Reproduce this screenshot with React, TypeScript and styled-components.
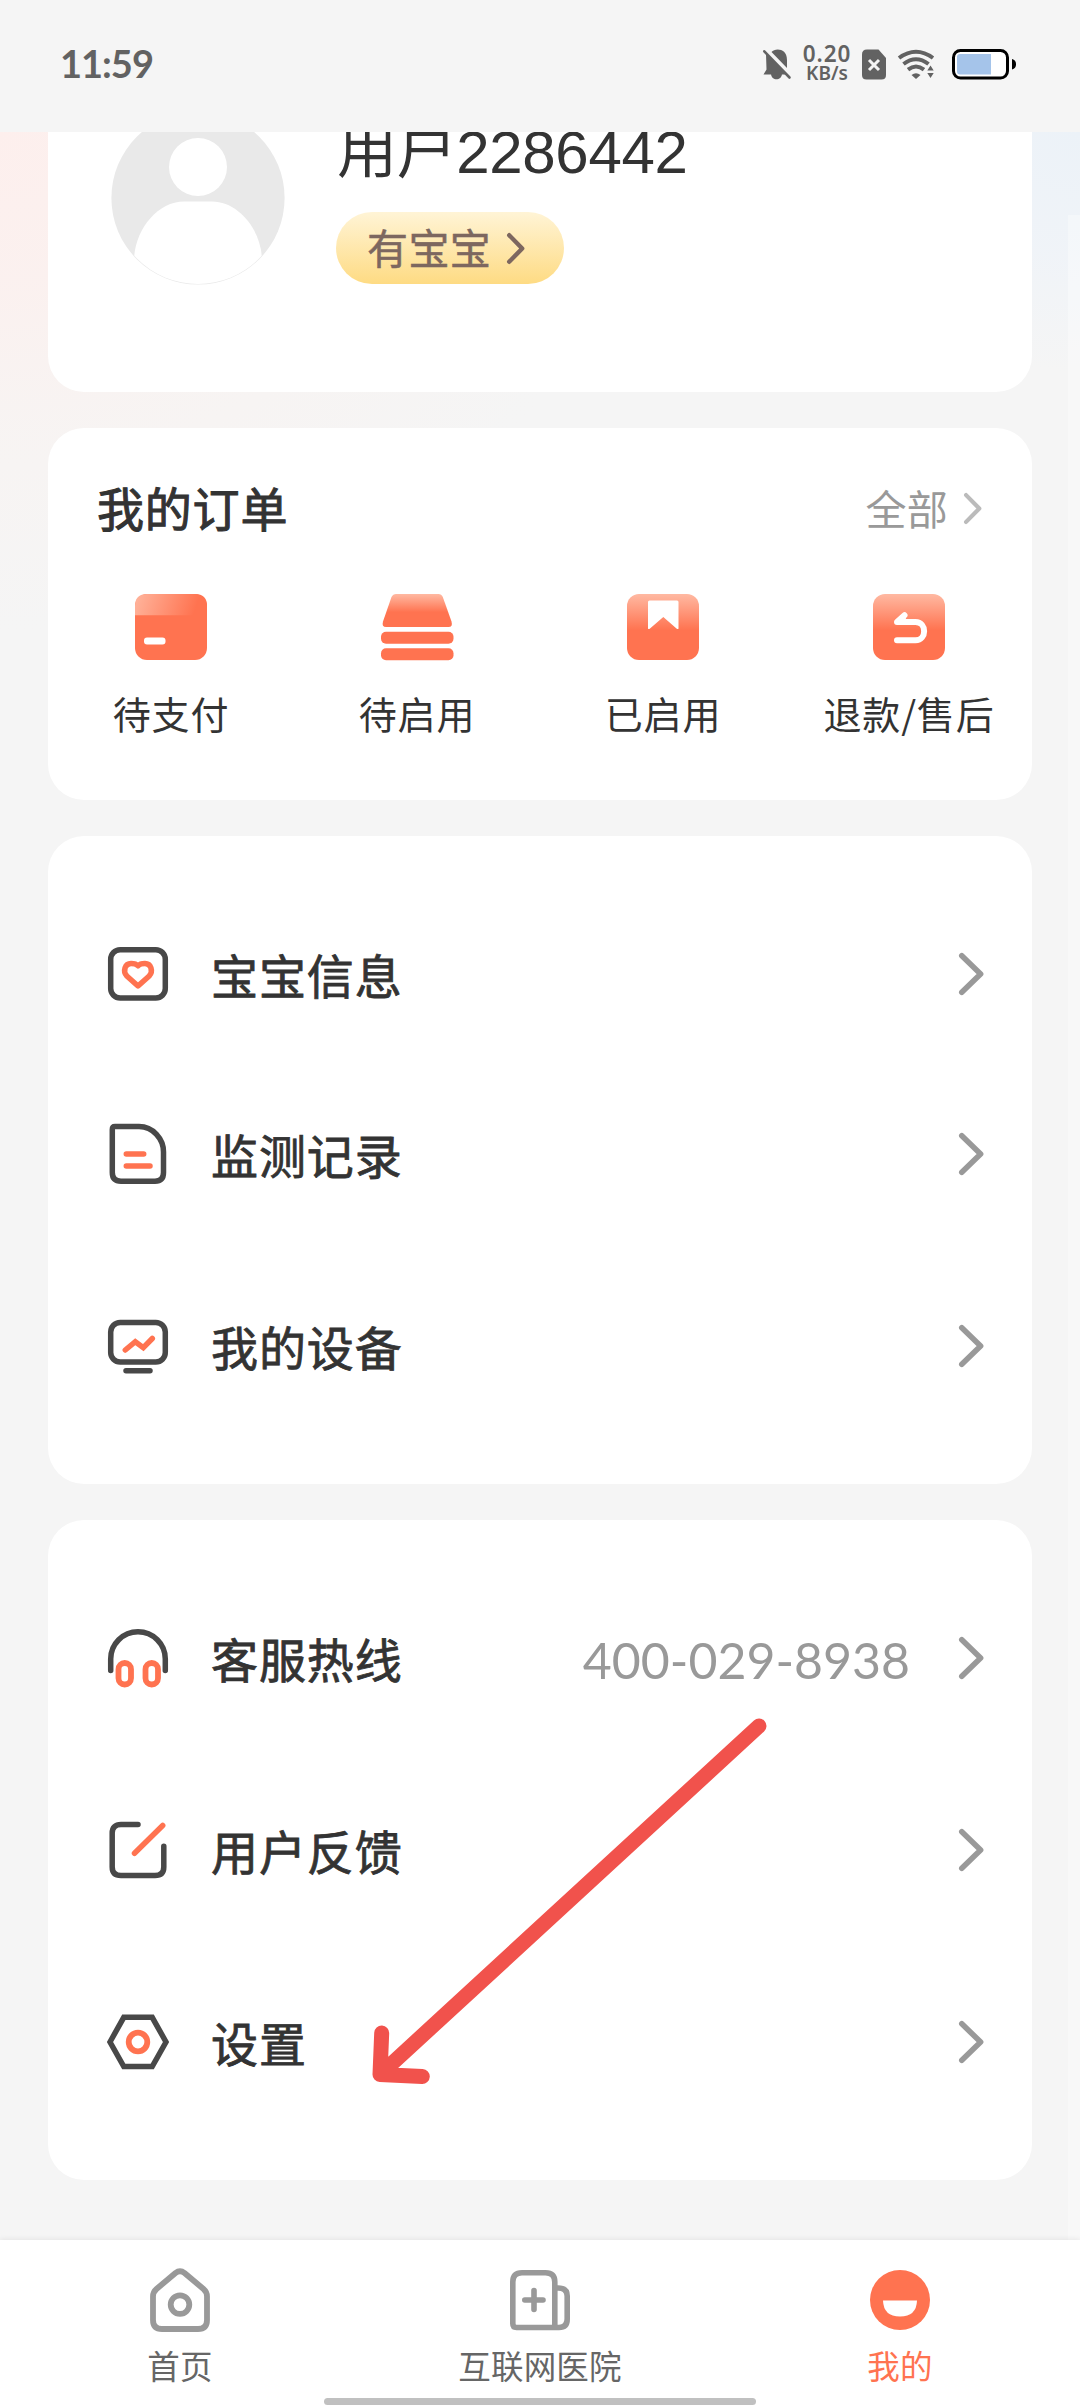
import React from "react";
import styled, { createGlobalStyle } from "styled-components";

const cjk = `"Noto Sans CJK SC", sans-serif`;
const ink = "#333333";
const coral = "#ff7350";
const line = "#484848";

const GlobalStyle = createGlobalStyle`
  * { box-sizing: border-box; }
  body { margin: 0; background: #f5f5f5; font-family: ${cjk}; color: ${ink}; }
  svg { display: block; overflow: visible; flex: none; }
`;

const Screen = styled.div`
  position: relative;
  width: 1080px;
  height: 2408px;
  overflow: hidden;
  display: flex;
  flex-direction: column;
  background: #f5f5f5;
`;

const StatusBar = styled.header`
  flex: none;
  height: 132px;
  padding: 0 64px 4px 60px;
  display: flex;
  align-items: center;
  justify-content: space-between;
  background: #f5f5f5;
  color: #626262;
`;

const Clock = styled.div`
  padding-bottom: 2px;
  font: 700 38px/40px Lato, sans-serif;
  letter-spacing: -1px;
`;

const StatusIcons = styled.div`
  display: flex;
  align-items: center;
`;

const Speed = styled.div`
  width: 52px;
  margin: 0 9px 0 10px;
  padding-bottom: 2px;
  text-align: center;
  font-family: "Noto Sans", sans-serif;
  font-weight: 600;
  white-space: nowrap;
`;

const SpeedValue = styled.div`
  font-size: 22.5px;
  line-height: 20px;
  letter-spacing: 0.9px;
`;

const SpeedUnit = styled.div`
  font-size: 19px;
  line-height: 18px;
`;

const Sim = styled.div`
  margin-right: 12px;
`;

const Signal = styled.div`
  margin-right: 17px;
`;

const Content = styled.main`
  flex: 1;
  min-height: 0;
  position: relative;
  padding: 0 48px;
  overflow: hidden;
  display: flex;
  flex-direction: column;
  gap: 36px;
  background:
    radial-gradient(ellipse 640px 500px at 0 0, #fdefed 0%, rgba(252, 240, 238, 0.85) 30%, rgba(249, 243, 241, 0.6) 60%, rgba(245, 245, 245, 0) 100%),
    radial-gradient(ellipse 300px 240px at 100% 0, #ecf2f8 0%, rgba(238, 243, 249, 0.75) 50%, rgba(245, 245, 245, 0) 100%),
    #f5f5f5;
`;

const ScrollTrack = styled.div`
  position: absolute;
  top: 83px;
  right: 0;
  bottom: 0;
  width: 12px;
  background: rgba(255, 255, 255, 0.35);
`;

const Card = styled.section`
  flex: none;
  background: #fff;
  border-radius: 36px;
`;

const ProfileCard = styled(Card)`
  height: 260px;
  padding-left: 63px;
  display: flex;
  gap: 51px;
  overflow: hidden;
  border-top-left-radius: 0;
  border-top-right-radius: 0;
`;

const AvatarFrame = styled.div`
  margin-top: -21px;
`;

const ProfileText = styled.div`
  margin-top: -21px;
  display: flex;
  flex-direction: column;
  align-items: flex-start;
`;

const UserName = styled.div`
  height: 101px;
  padding-left: 1px;
  font: 400 60px/84px "Liberation Sans", ${cjk};
  letter-spacing: -0.35px;
  white-space: nowrap;
`;

const BabyTag = styled.div`
  width: 228px;
  height: 72px;
  padding-left: 31px;
  border-radius: 36px;
  display: flex;
  align-items: center;
  gap: 16px;
  background: linear-gradient(#fff4d6, #fedb83);
  color: #7d675f;
  font-size: 41px;
  letter-spacing: 0.4px;
  line-height: 69px;
  -webkit-text-stroke: 0.5px currentColor;
  white-space: nowrap;
`;

const TagText = styled.span`
  padding-bottom: 3px;
`;

const OrdersCard = styled(Card)`
  height: 372px;
`;

const OrdersHead = styled.div`
  height: 166px;
  padding: 0 50px 6px 49px;
  display: flex;
  align-items: center;
  justify-content: space-between;
`;

const OrdersTitle = styled.h2`
  margin: 0;
  padding-bottom: 3px;
  font-size: 47px;
  letter-spacing: 0.8px;
  line-height: 60px;
  font-weight: 400;
  -webkit-text-stroke: 1px currentColor;
`;

const AllLink = styled.div`
  display: flex;
  align-items: center;
  gap: 16px;
  font-size: 41px;
  letter-spacing: 0.3px;
  line-height: 60px;
  color: #999;
`;

const AllText = styled.span`
  padding-bottom: 3px;
`;

const OrderGrid = styled.div`
  display: grid;
  grid-template-columns: repeat(4, 1fr);
`;

const OrderItem = styled.div`
  display: flex;
  flex-direction: column;
  align-items: center;
  gap: 28px;
  font-size: 38px;
  letter-spacing: 0.8px;
  line-height: 50px;
  white-space: nowrap;
`;

const MenuCard = styled(Card)`
  padding: 42px 48px 42px 60px;
`;

const Row = styled.div<{ $compact?: boolean }>`
  height: ${(p) => (p.$compact ? 168 : 192)}px;
  margin-bottom: ${(p) => (p.$compact ? 12 : 0)}px;
  display: flex;
  align-items: center;
`;

const RowLabel = styled.div`
  flex: 1;
  padding: 0 0 1px 43px;
  font-size: 47px;
  letter-spacing: 0.9px;
  line-height: 64px;
  -webkit-text-stroke: 0.8px currentColor;
`;

const RowValue = styled.div`
  margin-right: 49px;
  padding-top: 4px;
  font: 400 50px/64px Lato, sans-serif;
  color: #999;
`;

const TabBar = styled.nav`
  flex: none;
  position: relative;
  height: 168px;
  display: grid;
  grid-template-columns: repeat(3, 1fr);
  background: #fff;
  box-shadow: 0 -1px 5px rgba(0, 0, 0, 0.07);
`;

const Tab = styled.div<{ $active?: boolean }>`
  padding-top: 28px;
  display: flex;
  flex-direction: column;
  align-items: center;
  gap: 13px;
  font-size: 32.5px;
  letter-spacing: 0.2px;
  line-height: 40px;
  color: ${(p) => (p.$active ? coral : "#666")};
`;

const HomeIndicator = styled.div`
  position: absolute;
  left: 324px;
  bottom: 3px;
  width: 432px;
  height: 7px;
  border-radius: 4px;
  background: #c0c0c0;
`;

const Pointer = styled.svg`
  position: absolute;
  left: 360px;
  top: 1700px;
`;

const Chevron = ({ w, h, s, color }: { w: number; h: number; s: number; color: string }) => (
  <svg width={w} height={h} fill="none" stroke={color} strokeWidth={s} strokeLinecap="round" strokeLinejoin="round">
    <path d={`M${s / 2} ${s / 2}L${w - s / 2 - 0.6} ${h / 2}L${s / 2} ${h - s / 2}`} />
  </svg>
);

const Avatar = () => (
  <svg width="174" height="174" viewBox="0 0 174 174">
    <defs>
      <clipPath id="face"><circle cx="87" cy="87" r="86" /></clipPath>
    </defs>
    <circle cx="87" cy="87" r="86.6" fill="#e9e9e9" />
    <g clipPath="url(#face)" fill="#fff">
      <circle cx="87" cy="56" r="29" />
      <path d="M23 174V150C23 120 46 90.500 73 90.500H101C128 90.500 151 120 151 150V174Z" />
    </g>
  </svg>
);

const BellOff = () => (
  <svg width="28" height="31" viewBox="0 0 28 31">
    <path fill="#626262" d="M3 5L23 25.500H.5L3.500 20.500ZM8.500 3C12-1 24-1 24 11V19ZM8 25H19C18.500 32 8.500 32 8 25Z" />
    <path d="M1.300 2.300L26.500 28.500" stroke="#626262" strokeWidth="2.600" strokeLinecap="round" />
  </svg>
);

const SimOff = () => (
  <svg width="24" height="31" viewBox="0 0 24 31">
    <path fill="#626262" d="M5 .5H16.500L24 9V26Q24 30.500 19.500 30.500H4.500Q0 30.500 0 26V5.500Q0 .5 5 .5Z" />
    <path d="M7 11L17 21M17 11L7 21" stroke="#f5f5f5" strokeWidth="3" />
  </svg>
);

const Wifi = () => (
  <svg width="37" height="30" viewBox="0 0 37 30" fill="none" stroke="#626262" strokeWidth="4">
    <path d="M1 9Q18-3.500 35 9M5.500 15Q18 5.500 30.500 15M10 20.600Q18 14.500 26 20.600" />
    <path d="M13.500 26Q18 22.500 22.500 26L18 30Z" fill="#626262" stroke="none" />
    <path d="M29.300 21.500L32.500 16.500L35.700 21.500ZM29.300 24L32.500 29L35.700 24Z" fill="#626262" stroke="none" />
  </svg>
);

const Battery = () => (
  <svg width="64" height="31" viewBox="0 0 64 31">
    <rect x="1.500" y="1.500" width="54" height="27.500" rx="7" fill="#fff" stroke="#000" strokeWidth="3" />
    <path d="M5 8Q5 5 8 5H39V25.500H8Q5 25.500 5 22.500Z" fill="#a5c4ea" />
    <path d="M60 10Q64 11 64 15.300Q64 19.600 60 20.600Z" fill="#000" />
  </svg>
);

const WarmGradient = ({ id }: { id: string }) => (
  <linearGradient id={id} x1="0" y1="0" x2="0" y2="1">
    <stop offset="0" stopColor="#ffb9a2" />
    <stop offset="0.55" stopColor={coral} />
  </linearGradient>
);

const PayIcon = () => (
  <svg width="72" height="66" viewBox="0 0 72 66">
    <defs>
      <linearGradient id="pay" x1="0" y1="0" x2="1" y2="0.1">
        <stop offset="0" stopColor="#ffb59d" />
        <stop offset="0.9" stopColor={coral} />
      </linearGradient>
    </defs>
    <rect width="72" height="66" rx="12" fill={coral} />
    <path d="M0 21.300V12Q0 0 12 0H60Q72 0 72 12V21.300Z" fill="url(#pay)" />
    <rect x="9" y="43.500" width="21.500" height="7" rx="3" fill="#fff" />
  </svg>
);

const StackIcon = () => (
  <svg width="72" height="66" viewBox="0 0 72 66">
    <defs><WarmGradient id="stack" /></defs>
    <path d="M15 0H57.500Q60.500 0 61.800 3L70.500 27.500Q72 33 67.500 33H5Q.5 33 2 27.500L10.500 3Q12 0 15 0Z" fill="url(#stack)" />
    <rect y="37.700" width="72.500" height="12" rx="5" fill={coral} />
    <rect y="54.300" width="72.500" height="12" rx="5" fill={coral} />
  </svg>
);

const BookmarkIcon = () => (
  <svg width="72" height="66" viewBox="0 0 72 66">
    <defs><WarmGradient id="mark" /></defs>
    <rect width="72" height="66" rx="12" fill="url(#mark)" />
    <path d="M21 8Q21 6.500 22.500 6.500H50Q51.500 6.500 51.500 8V34.500Q51 35.500 49.500 34.500L36.300 23L23 34.500Q21.500 35.500 21 34.500Z" fill="#fff" />
  </svg>
);

const ReturnIcon = () => (
  <svg width="72" height="66" viewBox="0 0 72 66">
    <defs><WarmGradient id="back" /></defs>
    <rect width="72" height="66" rx="12" fill="url(#back)" />
    <path d="M24 46.300H42.500C54 46.300 54 28 42.500 28H24L31.500 21.200" fill="none" stroke="#fff" strokeWidth="6" strokeLinecap="round" strokeLinejoin="round" />
    <path d="M23 28L31.500 20.500L34 28Z" fill="#fff" />
  </svg>
);

const MenuGlyph = ({ children }: { children: React.ReactNode }) => (
  <svg width="60" height="60" viewBox="0 0 60 60" fill="none" stroke={line} strokeWidth="5.500" strokeLinecap="round" strokeLinejoin="round">
    {children}
  </svg>
);

const HeartGlyph = () => (
  <MenuGlyph>
    <rect x="2.700" y="5.700" width="54.600" height="48.300" rx="9.500" />
    <path stroke={coral} d="M30 42L18.800 32C14.500 27 17 19.400 23 19.400C26 19.400 28.500 20 30 21.800C31.500 20 34 19.400 37 19.400C43 19.400 45.500 27 41.200 32Z" />
  </MenuGlyph>
);

const RecordGlyph = () => (
  <MenuGlyph>
    <path d="M7 2.600H31C45 2.600 55.500 15 55.500 28V48.500Q55.500 57.200 47 57.200H13Q4.300 57.200 4.300 48.500V5.500Q4.300 2.600 7 2.600Z" />
    <path stroke={coral} d="M18.300 30H35.700M18.300 42H42" />
  </MenuGlyph>
);

const DeviceGlyph = () => (
  <MenuGlyph>
    <rect x="2.700" y="6.400" width="54.600" height="39.600" rx="9.500" />
    <path d="M18 54.700H42" />
    <path stroke={coral} strokeLinejoin="miter" d="M17.300 34L27.300 25.700L35.300 31.700L44.300 22.500" />
  </MenuGlyph>
);

const HeadsetGlyph = () => (
  <MenuGlyph>
    <path d="M2.700 42.500V31A27.300 27.300 0 0 1 57.300 31V42.500" />
    <g stroke={coral} strokeWidth="5.800">
      <rect x="10.500" y="35" width="12.500" height="21.500" rx="6.200" />
      <rect x="37.500" y="35" width="12.500" height="21.500" rx="6.200" />
    </g>
  </MenuGlyph>
);

const EditGlyph = () => (
  <MenuGlyph>
    <path d="M30 4.500H13Q4.200 4.500 4.200 13V47Q4.200 55.500 13 55.500H47Q55.800 55.500 55.800 47V26.300" />
    <path stroke={coral} d="M54.700 5.500L26.500 33.300" />
  </MenuGlyph>
);

const SettingsGlyph = () => (
  <MenuGlyph>
    <path strokeLinejoin="miter" d="M2 30L15.800 5.300H44.200L58 30L44.200 54.500H15.800Z" />
    <circle cx="30" cy="30" r="9.300" stroke={coral} strokeWidth="5.800" />
  </MenuGlyph>
);

const HomeIcon = () => (
  <svg width="60" height="64" viewBox="0 0 60 64" fill="none" stroke="#999" strokeWidth="5.800" strokeLinejoin="round">
    <path d="M25.500 5Q30 1.500 34.500 5L53.500 21Q57 24 57 28.500V52Q57 61 48 61H12Q3 61 3 52V28.500Q3 24 6.500 21Z" />
    <circle cx="30" cy="36.600" r="9.300" />
  </svg>
);

const HospitalIcon = () => (
  <svg width="60" height="64" viewBox="0 0 60 64" fill="none" stroke="#999" strokeWidth="5.600" strokeLinecap="round" strokeLinejoin="round">
    <path d="M44.800 59.500H6.500Q2.800 59.500 2.800 55.500V14Q2.800 4.800 12 4.800H35.500Q44.800 4.800 44.800 14ZM44.800 20H48Q57.200 20 57.200 28V51Q57.200 59.500 49 59.500H44.800" />
    <path d="M14.800 32H33M24 22.500V41.500" />
  </svg>
);

const FaceIcon = () => (
  <svg width="60" height="64" viewBox="0 0 60 64">
    <circle cx="30" cy="32" r="30" fill={coral} />
    <path d="M13 32.500H47Q46.500 48.500 30 48.500Q13.500 48.500 13 32.500Z" fill="#fff" />
  </svg>
);

const orders = [
  { label: "待支付", icon: <PayIcon /> },
  { label: "待启用", icon: <StackIcon /> },
  { label: "已启用", icon: <BookmarkIcon /> },
  { label: "退款/售后", icon: <ReturnIcon /> },
];

type Entry = { label: string; icon: React.ReactNode; value?: string; compact?: boolean };

const personal: Entry[] = [
  { label: "宝宝信息", icon: <HeartGlyph /> },
  { label: "监测记录", icon: <RecordGlyph />, compact: true },
  { label: "我的设备", icon: <DeviceGlyph /> },
];

const support: Entry[] = [
  { label: "客服热线", icon: <HeadsetGlyph />, value: "400-029-8938" },
  { label: "用户反馈", icon: <EditGlyph /> },
  { label: "设置", icon: <SettingsGlyph /> },
];

const Menu = ({ entries }: { entries: Entry[] }) => (
  <MenuCard>
    {entries.map((e) => (
      <Row key={e.label} $compact={e.compact}>
        {e.icon}
        <RowLabel>{e.label}</RowLabel>
        {e.value && <RowValue>{e.value}</RowValue>}
        <Chevron w={25} h={42} s={5.6} color="#999" />
      </Row>
    ))}
  </MenuCard>
);

export default function App() {
  return (
    <Screen>
      <GlobalStyle />
      <StatusBar>
        <Clock>11:59</Clock>
        <StatusIcons>
          <BellOff />
          <Speed>
            <SpeedValue>0.20</SpeedValue>
            <SpeedUnit>KB/s</SpeedUnit>
          </Speed>
          <Sim><SimOff /></Sim>
          <Signal><Wifi /></Signal>
          <Battery />
        </StatusIcons>
      </StatusBar>
      <Content>
        <ScrollTrack />
        <ProfileCard>
          <AvatarFrame><Avatar /></AvatarFrame>
          <ProfileText>
            <UserName>用户2286442</UserName>
            <BabyTag>
              <TagText>有宝宝</TagText>
              <Chevron w={18} h={31} s={4.4} color="#7d675f" />
            </BabyTag>
          </ProfileText>
        </ProfileCard>
        <OrdersCard>
          <OrdersHead>
            <OrdersTitle>我的订单</OrdersTitle>
            <AllLink>
              <AllText>全部</AllText>
              <Chevron w={18} h={31} s={4.2} color="#bbb" />
            </AllLink>
          </OrdersHead>
          <OrderGrid>
            {orders.map((o) => (
              <OrderItem key={o.label}>
                {o.icon}
                {o.label}
              </OrderItem>
            ))}
          </OrderGrid>
        </OrdersCard>
        <Menu entries={personal} />
        <Menu entries={support} />
      </Content>
      <TabBar>
        <Tab><HomeIcon />首页</Tab>
        <Tab><HospitalIcon />互联网医院</Tab>
        <Tab $active><FaceIcon />我的</Tab>
        <HomeIndicator />
      </TabBar>
      <Pointer width="420" height="400" fill="none" stroke="#f1524c" strokeWidth="15" strokeLinecap="round" strokeLinejoin="round">
        <path d="M399 26L20 374.500M21.700 333L20 374.500L62.300 376.500" />
      </Pointer>
    </Screen>
  );
}
